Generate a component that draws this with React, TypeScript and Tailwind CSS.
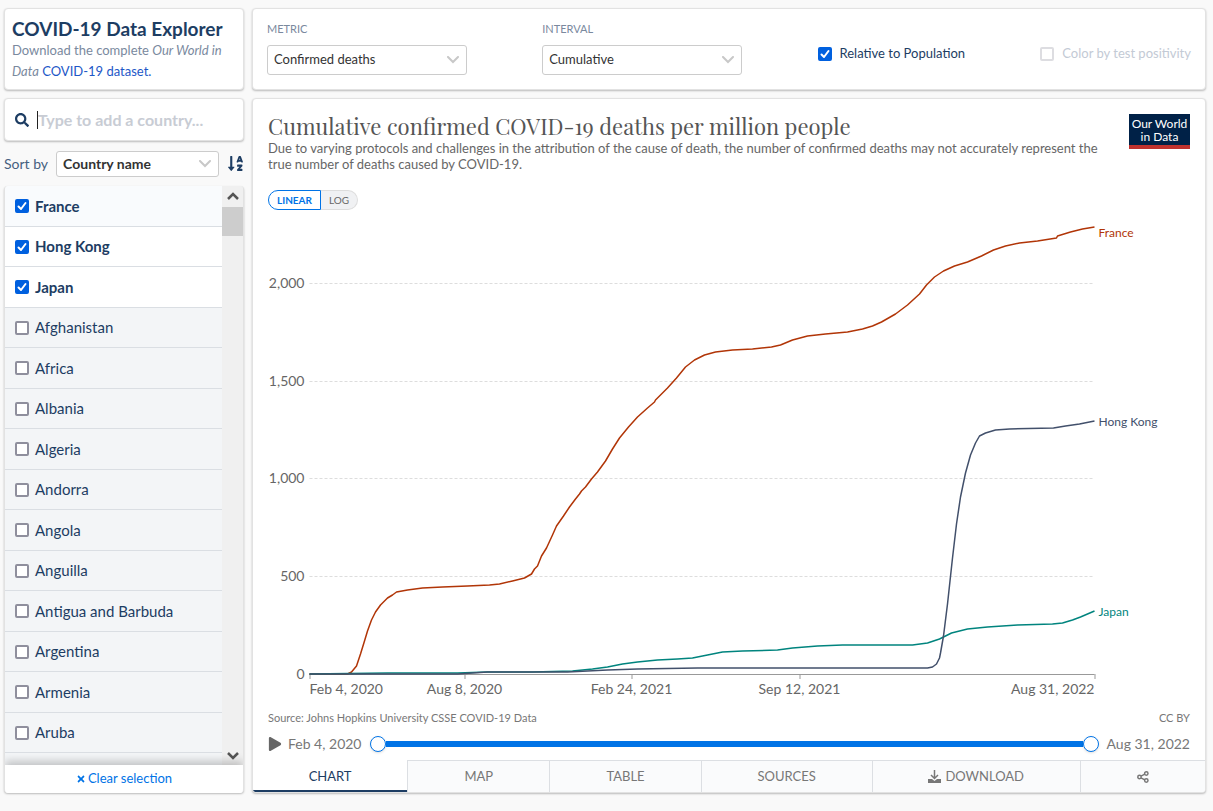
import { useId, useState } from 'react';
import type { ReactNode } from 'react';
import { FaPlay, FaSearch, FaSortAlphaDown, FaTimes } from 'react-icons/fa';

const COUNTRIES = [
  'France', 'Hong Kong', 'Japan', 'Afghanistan', 'Africa', 'Albania', 'Algeria', 'Andorra',
  'Angola', 'Anguilla', 'Antigua and Barbuda', 'Argentina', 'Armenia', 'Aruba',
];

const SERIES = [
  {
    name: 'France',
    color: '#b13507',
    labelY: 19,
    points:
      '42,456 80,456 84,454 89,448 93,436 97,423 100,413 104,402 108,394 113,387 120,380 125,377 129,374 140,372 155,370 175,369 200,368 222,367 232,366 245,363 257,360 264,356 267,351 270,348 274,338 279,330 285,317 289,308 296,298 302,289 308,281 312,276 314,273 318,269 324,261 330,254 338,243 345,231 352,220 361,209 370,199 380,190 387,184 388,182 400,170 409,160 418,149 427,142 437,137 448,134 465,132 485,131 504,129 513,127 525,122 540,118 558,116 580,114 595,111 605,108 614,104 628,96 640,87 652,76 659,67 667,59 676,53 687,48 700,44 714,38 726,32 738,28 752,25 770,23 789,20 790,18 803,14 815,11 827,9',
  },
  {
    name: 'Japan',
    color: '#00847e',
    labelY: 398,
    points:
      '42,456 120,455 190,455 220,454 265,454 305,453 325,451 340,449 355,446 370,444 390,442 410,441 425,440 440,437 455,434 475,433 510,432 525,430 550,428 575,427 645,427 660,425 672,421 684,415 700,411 720,409 750,407 785,406 795,405 805,402 813,399 827,393',
  },
  {
    name: 'Hong Kong',
    color: '#42506b',
    labelY: 208,
    points:
      '42,456 190,456 220,454 300,454 340,452 370,451 430,450 660,450 665,449 669,446 672,440 673,435 676,418 680,386 685,340 689,306 693,279 698,255 703,237 708,225 712,218 718,215 728,212 742,211 786,210 798,208 812,206 827,203',
  },
];

const GRID_LINES = [
  { label: '2,000', y: 65 },
  { label: '1,500', y: 163 },
  { label: '1,000', y: 260 },
  { label: '500', y: 358 },
];

const DATES = [
  { label: 'Feb 4, 2020', x: 42, anchor: 'start' },
  { label: 'Aug 8, 2020', x: 197, anchor: 'middle' },
  { label: 'Feb 24, 2021', x: 364, anchor: 'middle' },
  { label: 'Sep 12, 2021', x: 532, anchor: 'middle' },
  { label: 'Aug 31, 2022', x: 827, anchor: 'end' },
] as const;

const card = 'bg-white border border-[#e2e2e2] rounded-sm shadow-[0_1px_2px_rgba(0,0,0,0.25)]';

function Chevron({ className }: { className: string }) {
  return (
    <svg viewBox="0 0 14 8" className={className} fill="none" stroke="#c8c8c8" strokeWidth="2" aria-hidden="true">
      <path d="M2 1l5 5 5-5" strokeLinecap="round" />
    </svg>
  );
}

function Dropdown({ id, value, options, className }: { id: string; value: string; options: string[]; className: string }) {
  return (
    <div className="relative">
      <select
        id={id}
        defaultValue={value}
        className={`block w-full appearance-none rounded-[3px] border border-[#ccc] bg-white px-1.5 text-[#333] ${className}`}
      >
        {options.map((option) => (
          <option key={option}>{option}</option>
        ))}
      </select>
      <Chevron className="pointer-events-none absolute right-[7px] top-1/2 h-2 w-3.5 -translate-y-1/2" />
    </div>
  );
}

function Checkbox({ label, initial = false, disabled = false, className }: {
  label: string;
  initial?: boolean;
  disabled?: boolean;
  className: string;
}) {
  const id = useId();
  const [checked, setChecked] = useState(initial);

  return (
    <div className={`flex items-center ${className}`}>
      <span className="relative block size-3.5 shrink-0">
        <input
          id={id}
          type="checkbox"
          checked={checked}
          disabled={disabled}
          onChange={() => setChecked(!checked)}
          className="block size-3.5 appearance-none rounded-[2px] border-2 border-[#8f8f9d] bg-white checked:border-[#0060df] checked:bg-[#0060df] disabled:border-[#dddde1]"
        />
        {checked && (
          <svg viewBox="0 0 14 14" className="pointer-events-none absolute inset-0" fill="none" stroke="#fff" strokeWidth="2" aria-hidden="true">
            <path d="M3.5 7.5 6 10l4.500-6" strokeLinecap="round" strokeLinejoin="round" />
          </svg>
        )}
      </span>
      <label htmlFor={id}>{label}</label>
    </div>
  );
}

function Sidebar() {
  return (
    <aside className="flex min-h-0 flex-col">
      <div className={`${card} h-[82px] px-[7px] pt-2`}>
        <h1 className="text-[19px] leading-[23px] font-bold whitespace-nowrap text-[#1d3d63]">COVID-19 Data Explorer</h1>
        <p className="text-[13px] leading-[21px] text-[#7a899e]">
          Download the complete <em>Our World in Data</em>{' '}
          <a href="#dataset" className="text-[#1d57c7]">COVID-19 dataset.</a>
        </p>
      </div>

      <div className={`${card} mt-2 flex h-[43px] items-center gap-2 px-2.5`}>
        <FaSearch className="size-3.5 shrink-0 text-[#1d3d63]" />
        <div className="flex min-w-0 flex-1 items-center">
          <span className="h-[18px] w-px shrink-0 bg-[#222]" />
          <input
            type="text"
            aria-label="Type to add a country"
            placeholder="Type to add a country..."
            className="w-full min-w-0 text-base font-bold text-[#1d3d63] outline-none placeholder:text-[#c8ccd4]"
          />
        </div>
      </div>

      <div className="flex h-[45px] items-center gap-2 text-sm">
        <label htmlFor="sort" className="shrink-0 text-[#46607f]">Sort by</label>
        <div className="flex-1">
          <Dropdown id="sort" value="Country name" options={['Country name', 'Confirmed deaths']} className="h-[26px] font-bold" />
        </div>
        <button type="button" aria-label="Sort ascending" className="shrink-0 text-[#1d3d63]">
          <FaSortAlphaDown className="size-[17px]" />
        </button>
      </div>

      <div className="flex min-h-0 flex-1 flex-col overflow-hidden rounded-sm border-x border-[#e2e2e2] bg-[#f3f5f7] shadow-[0_1px_2px_rgba(0,0,0,0.25)]">
        <div className="flex min-h-0 flex-1">
          <ul className="min-w-0 flex-1 overflow-hidden text-[15px] text-[#1d3d63]">
            {COUNTRIES.map((country, i) => (
              <li
                key={country}
                className={`flex border-b border-[#dadee3] odd:h-[41px] even:h-10 ${i === 0 ? 'bg-[#f9fbfd] font-bold' : i < 3 ? 'bg-white font-bold' : 'bg-[#f3f5f7]'}`}
              >
                <Checkbox label={country} initial={i < 3} className="gap-1.5 px-2.5" />
              </li>
            ))}
          </ul>
          <div className="flex w-[21px] flex-col items-center bg-[#f0f0f0]" aria-hidden="true">
            <svg viewBox="0 0 12 8" className="mt-1.5 mb-[7px] h-2 w-3 shrink-0" fill="none" stroke="#555" strokeWidth="2.5">
              <path d="m1 7 5-5 5 5" />
            </svg>
            <div className="h-[29px] w-full bg-[#cdcdcd]" />
            <div className="flex-1" />
            <svg viewBox="0 0 12 8" className="mb-[5px] h-2 w-3 shrink-0" fill="none" stroke="#555" strokeWidth="2.5">
              <path d="m1 1 5 5 5-5" />
            </svg>
          </div>
        </div>
        <button
          type="button"
          className="z-10 flex h-7 shrink-0 items-center justify-center gap-0.5 bg-white text-[13px] text-[#0073e6] shadow-[0_-4px_8px_rgba(0,0,0,0.2)]"
        >
          <FaTimes className="size-2.5" />
          Clear selection
        </button>
      </div>
    </aside>
  );
}

function Controls() {
  return (
    <div className={`${card} flex h-[82px] shrink-0 justify-between px-3.5 text-[13px]`}>
      <div className="w-[200px] pt-3">
        <label htmlFor="metric" className="block pb-2 text-[11px] leading-4 text-[#7a899e]">METRIC</label>
        <Dropdown id="metric" value="Confirmed deaths" options={['Confirmed deaths', 'Confirmed cases']} className="h-[30px]" />
      </div>
      <div className="w-[200px] pt-3">
        <label htmlFor="interval" className="block pb-2 text-[11px] leading-4 text-[#7a899e]">INTERVAL</label>
        <Dropdown id="interval" value="Cumulative" options={['Cumulative', '7-day rolling average']} className="h-[30px]" />
      </div>
      <Checkbox label="Relative to Population" initial className="gap-2 pt-2.5 text-[#1d3d63]" />
      <Checkbox label="Color by test positivity" disabled className="gap-2 pt-2.5 text-[#c3cad5]" />
    </div>
  );
}

function LineChart() {
  return (
    <svg viewBox="1 0 921 482" className="min-h-0 w-full flex-1" role="img" aria-label="Cumulative confirmed deaths per million people">
      {GRID_LINES.map(({ label, y }) => (
        <g key={label}>
          <line x1="42" x2="827" y1={y + 0.5} y2={y + 0.5} stroke="#ddd" strokeDasharray="3 2" />
          <text x="37" y={y + 5} textAnchor="end" fontSize="14" fill="#666">{label}</text>
        </g>
      ))}
      <text x="37" y="461" textAnchor="end" fontSize="14" fill="#666">0</text>

      <path d="M42 456.5H827" stroke="#999" />
      {DATES.map(({ label, x, anchor }) => (
        <g key={label}>
          <path d={`M${x + 0.5} 456v5`} stroke="#999" />
          <text x={x} y="476" textAnchor={anchor} fontSize="14" fill="#666">{label}</text>
        </g>
      ))}

      {SERIES.map(({ name, color, labelY, points }) => (
        <g key={name}>
          <polyline points={points} fill="none" stroke={color} strokeWidth="1.5" strokeLinejoin="round" />
          <text x="831" y={labelY} fontSize="12" fill={color}>{name}</text>
        </g>
      ))}
    </svg>
  );
}

function Tab({ children, className, active = false, label }: {
  children: ReactNode;
  className: string;
  active?: boolean;
  label?: string;
}) {
  return (
    <button
      type="button"
      aria-label={label}
      aria-pressed={active}
      className={`flex basis-0 items-center justify-center gap-1 ${className} ${
        active ? 'border-b-2 border-[#1d3d63] pt-[3px] text-[#1d3d63]' : 'border-t border-l border-[#dcdfe3] bg-[#fafbfc] text-[#777]'
      }`}
    >
      {children}
    </button>
  );
}

function ChartCard() {
  return (
    <main className={`${card} mt-2 flex min-h-0 flex-1 flex-col overflow-hidden`}>
      <div className="flex min-h-0 flex-1 flex-col px-[15px]">
        <div className="flex items-start justify-between pt-[15px]">
          <div>
            <h2 className="font-['Playfair_Display','Liberation_Serif',serif] text-[22px] leading-6 text-[#555]">
              Cumulative confirmed COVID-19 deaths per million people
            </h2>
            <p className="max-w-[840px] pt-0.5 text-[13px] leading-4 text-[#666]">
              Due to varying protocols and challenges in the attribution of the cause of death, the number of confirmed
              deaths may not accurately represent the true number of deaths caused by COVID-19.
            </p>
          </div>
          <a href="#home" className="w-[61px] shrink-0 border-b-4 border-[#c0322e] bg-[#002147] pt-[3px] pb-0.5 text-center text-[12px] leading-[13px] whitespace-nowrap text-white">
            Our World
            <br />
            in Data
          </a>
        </div>

        <div className="mt-[18px] mb-2 flex h-5 shrink-0 text-[10px]">
          <button type="button" className="rounded-l-full border border-[#0073e6] bg-white px-2 font-bold text-[#0073e6]">LINEAR</button>
          <button type="button" className="rounded-r-full border border-l-0 border-[#ddd] bg-[#f0f1f3] px-2 text-[#666]">LOG</button>
        </div>

        <LineChart />

        <div className="mt-2.5 flex justify-between text-[11px] leading-4 text-[#777]">
          <span>Source: Johns Hopkins University CSSE COVID-19 Data</span>
          <a href="#license">CC BY</a>
        </div>
        <div className="flex h-[34px] items-center pt-0.5 text-sm text-[#777]">
          <button type="button" aria-label="Play" className="mr-1.5 text-[#666]">
            <FaPlay className="size-3.5" />
          </button>
          <span>Feb 4, 2020</span>
          <div className="mx-2 flex flex-1 items-center">
            <button type="button" aria-label="Start date" className="size-4 shrink-0 rounded-full border border-[#0073e6] bg-white shadow" />
            <div className="h-1.5 flex-1 bg-[#0073e6]" />
            <button type="button" aria-label="End date" className="size-4 shrink-0 rounded-full border border-[#0073e6] bg-white shadow" />
          </div>
          <span>Aug 31, 2022</span>
        </div>
      </div>

      <nav className="flex h-8 shrink-0 text-[13px]">
        <Tab active className="grow-[155]">CHART</Tab>
        <Tab className="grow-[142]">MAP</Tab>
        <Tab className="grow-[151]">TABLE</Tab>
        <Tab className="grow-[171]">SOURCES</Tab>
        <Tab className="grow-[208]">
          <svg viewBox="0 0 13 13" className="size-[13px]" fill="none" stroke="currentColor" aria-hidden="true">
            <path d="M6.5 0v8M3 5l3.500 3.500L10 5" strokeWidth="1.5" />
            <path d="M0 9h4l2.500 2L9 9h4v4H0z" fill="currentColor" stroke="none" />
          </svg>
          DOWNLOAD
        </Tab>
        <Tab label="Share" className="grow-[125]">
          <svg viewBox="0 0 12 12" className="size-3" fill="none" stroke="currentColor" strokeWidth="1.5" aria-hidden="true">
            <circle cx="2.5" cy="6" r="1.7" />
            <circle cx="9.3" cy="2.5" r="1.7" />
            <circle cx="9.3" cy="9.5" r="1.7" />
            <path d="m4 5.200 3.800-2M4 6.800l3.800 2" />
          </svg>
        </Tab>
      </nav>
    </main>
  );
}

export default function App() {
  return (
    <div className="grid h-screen min-h-[600px] grid-cols-[240px_minmax(0,1fr)] gap-2 bg-[#f9f9f9] pt-2 pr-[7px] pb-[18px] pl-1 font-[Lato,'Liberation_Sans',sans-serif]">
      <Sidebar />
      <div className="flex min-h-0 flex-col">
        <Controls />
        <ChartCard />
      </div>
    </div>
  );
}
